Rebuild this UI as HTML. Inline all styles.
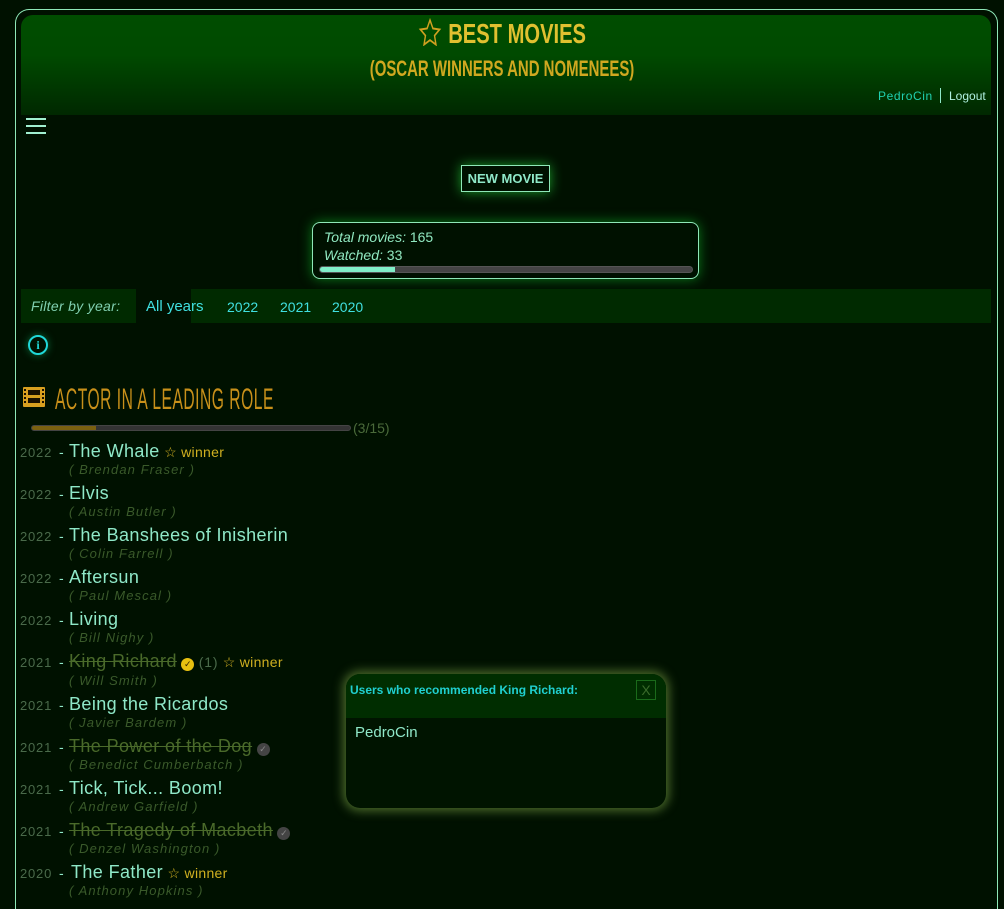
<!DOCTYPE html>
<html><head><meta charset="utf-8">
<style>
*{margin:0;padding:0;box-sizing:border-box}
html,body{width:1004px;height:894px;overflow:hidden;background:#001100;font-family:"Liberation Sans",sans-serif}
.abs{position:absolute}
#frame{left:15px;top:9px;width:983px;height:900px;border:1px solid #8fe8b8;border-bottom:none;border-radius:14px 14px 0 0}
#hdr{left:21px;top:15px;width:970px;height:100px;border-radius:12px 12px 0 0;background:linear-gradient(#004d00 0%,#004a00 40%,#002800 100%)}
.t1{left:0;width:1004px;text-align:center;color:#e0c030;font-family:"Liberation Sans Narrow","Liberation Sans",sans-serif;font-weight:bold;white-space:nowrap}
.user{top:89px;font-size:12px}
.menu{left:26px;width:20px;height:2px;background:#a0f0d0}
.btn{left:461px;top:165px;width:89px;height:27px;border:1px solid #8fe8b8;color:#8fe8c8;font-weight:bold;font-size:13px;text-align:center;line-height:25px;box-shadow:0 0 12px #1a9a2a}
.stats{left:312px;top:222px;width:387px;height:57px;border:1px solid #8fe8b8;border-radius:8px;box-shadow:0 0 12px #0a7a1a;color:#90e8c0;font-size:14px;font-style:italic;padding:5px 11px;line-height:18px}
.filter{left:21px;top:289px;width:970px;height:34px;background:#002a00}
.yr{color:#40e0e0;font-size:14px;top:299px}
.row{left:20px;height:22px;white-space:nowrap}
.y{color:#4a6a4a;font-size:13px;letter-spacing:.8px;display:inline-block;width:39px}
.d{color:#8fe8c8;font-size:14px;display:inline-block;width:10px}
.ti{color:#8fe8c8;font-size:18px;letter-spacing:.4px}
.st{color:#4a6a2a;text-decoration:line-through}
.ac{left:69px;color:#3a5a2a;font-size:13px;font-style:italic;letter-spacing:1.1px}
.win{color:#d0b020;font-size:14px;letter-spacing:.3px}
</style></head><body>
<div id="frame" class="abs"></div>
<div id="hdr" class="abs"></div>
<div class="abs t1" style="top:18px;font-size:28px;transform:scaleX(.72)">
<svg width="34" height="28" viewBox="0 0 24 20" style="vertical-align:-3px;margin-right:8px"><path d="M12 1.5l2.9 6 6.6.7-5 4.4 1.4 6.4L12 15.8l-5.9 3.2 1.4-6.4-5-4.4 6.6-.7z" fill="none" stroke="#d0a020" stroke-width="1.4"/></svg>BEST MOVIES</div>
<div class="abs t1" style="top:56px;font-size:22px;color:#d0a820;transform:scaleX(.68)">(OSCAR WINNERS AND NOMENEES)</div>
<div class="abs user" style="left:878px;color:#20d0b0;letter-spacing:.6px">PedroCin</div>
<div class="abs" style="left:940px;top:88px;width:1px;height:15px;background:#8fe8c8"></div>
<div class="abs user" style="left:949px;color:#b0f0e0">Logout</div>
<div class="abs menu" style="top:118px"></div>
<div class="abs menu" style="top:125px"></div>
<div class="abs menu" style="top:132px"></div>
<div class="abs btn">NEW MOVIE</div>
<div class="abs stats"><div>Total movies: <span style="font-style:normal">165</span></div><div>Watched: <span style="font-style:normal">33</span></div>
<div style="position:absolute;left:6px;top:43px;width:374px;height:7px;border-radius:4px;background:#444;border:1px solid #555;overflow:hidden"><div style="width:75px;height:100%;background:#80f0c8"></div></div></div>
<div class="abs filter"></div>
<div class="abs" style="left:136px;top:289px;width:55px;height:34px;background:#001100"></div>
<div class="abs" style="left:31px;top:298px;color:#80d0b0;font-size:14px;font-style:italic;letter-spacing:.3px">Filter by year:</div>
<div class="abs yr" style="left:146px;font-size:15px;top:298px">All years</div>
<div class="abs yr" style="left:227px">2022</div>
<div class="abs yr" style="left:280px">2021</div>
<div class="abs yr" style="left:332px">2020</div>
<div class="abs" style="left:28px;top:335px;width:20px;height:20px;border:2px solid #20d8d8;border-radius:50%;color:#20d8d8;font-size:12px;font-weight:bold;text-align:center;line-height:16px;font-family:'Liberation Serif',serif;box-shadow:0 0 8px #0a6a3a">i</div>
<svg class="abs" style="left:23px;top:387px" width="22" height="20" viewBox="0 0 22 20"><rect x="0" y="0" width="22" height="20" rx="1" fill="#d8a020"/><rect x="5" y="3" width="12" height="5" fill="#1a1000"/><rect x="5" y="11" width="12" height="5" fill="#1a1000"/><g fill="#1a1000"><rect x="1" y="2" width="2" height="2"/><rect x="1" y="6" width="2" height="2"/><rect x="1" y="10" width="2" height="2"/><rect x="1" y="14" width="2" height="2"/><rect x="19" y="2" width="2" height="2"/><rect x="19" y="6" width="2" height="2"/><rect x="19" y="10" width="2" height="2"/><rect x="19" y="14" width="2" height="2"/></g></svg>
<div class="abs" style="left:55px;top:383px;color:#c8901a;font-size:30px;font-family:'Liberation Sans Narrow','Liberation Sans',sans-serif;transform:scaleX(.52);transform-origin:left;letter-spacing:1px;white-space:nowrap">ACTOR IN A LEADING ROLE</div>
<div class="abs" style="left:31px;top:425px;width:320px;height:6px;border-radius:3px;background:#333;border:1px solid #444;overflow:hidden"><div style="width:64px;height:100%;background:#7a6010"></div></div>
<div class="abs" style="left:353px;top:420px;color:#4a6a3a;font-size:14px">(3/15)</div>

<div class="abs row" style="top:441px"><span class="y">2022</span><span class="d">-</span><span class="ti">The Whale</span> <span class="win">☆ winner</span></div>
<div class="abs ac" style="top:462px">( Brendan Fraser )</div>
<div class="abs row" style="top:483px"><span class="y">2022</span><span class="d">-</span><span class="ti">Elvis</span></div>
<div class="abs ac" style="top:504px">( Austin Butler )</div>
<div class="abs row" style="top:525px"><span class="y">2022</span><span class="d">-</span><span class="ti">The Banshees of Inisherin</span></div>
<div class="abs ac" style="top:546px">( Colin Farrell )</div>
<div class="abs row" style="top:567px"><span class="y">2022</span><span class="d">-</span><span class="ti">Aftersun</span></div>
<div class="abs ac" style="top:588px">( Paul Mescal )</div>
<div class="abs row" style="top:609px"><span class="y">2022</span><span class="d">-</span><span class="ti">Living</span></div>
<div class="abs ac" style="top:630px">( Bill Nighy )</div>
<div class="abs row" style="top:651px"><span class="y">2021</span><span class="d">-</span><span class="ti st">King Richard</span> <span style="display:inline-block;width:13px;height:13px;border-radius:50%;background:#e8c010;color:#302000;font-size:9px;text-align:center;line-height:13px">✓</span> <span class="y" style="font-size:14px;width:auto">(1)</span> <span class="win">☆ winner</span></div>
<div class="abs ac" style="top:673px">( Will Smith )</div>
<div class="abs row" style="top:694px"><span class="y">2021</span><span class="d">-</span><span class="ti">Being the Ricardos</span></div>
<div class="abs ac" style="top:715px">( Javier Bardem )</div>
<div class="abs row" style="top:736px"><span class="y">2021</span><span class="d">-</span><span class="ti st">The Power of the Dog</span> <span style="display:inline-block;width:13px;height:13px;border-radius:50%;background:#444;color:#888;font-size:9px;text-align:center;line-height:13px">✓</span></div>
<div class="abs ac" style="top:757px">( Benedict Cumberbatch )</div>
<div class="abs row" style="top:778px"><span class="y">2021</span><span class="d">-</span><span class="ti">Tick, Tick... Boom!</span></div>
<div class="abs ac" style="top:799px">( Andrew Garfield )</div>
<div class="abs row" style="top:820px"><span class="y">2021</span><span class="d">-</span><span class="ti st">The Tragedy of Macbeth</span> <span style="display:inline-block;width:13px;height:13px;border-radius:50%;background:#444;color:#888;font-size:9px;text-align:center;line-height:13px">✓</span></div>
<div class="abs ac" style="top:841px">( Denzel Washington )</div>
<div class="abs row" style="top:862px"><span class="y">2020</span><span class="d" style="width:12px">-</span><span class="ti">The Father</span> <span class="win">☆ winner</span></div>
<div class="abs ac" style="top:883px">( Anthony Hopkins )</div>

<div class="abs" style="left:346px;top:674px;width:320px;height:134px;border-radius:14px;background:#001400;overflow:hidden;box-shadow:0 0 10px 3px #4a6a2a">
<div style="height:44px;background:#002d00;color:#20d0d0;font-size:12px;font-weight:bold;padding:9px 0 0 4px">Users who recommended King Richard:</div>
<div style="position:absolute;left:290px;top:6px;width:20px;height:20px;border:1px solid #1a6a1a;color:#3a6a2a;font-size:14px;text-align:center;line-height:18px">X</div>
<div style="padding:6px 9px;color:#8fe8c8;font-size:15px">PedroCin</div>
</div>
</body></html>
